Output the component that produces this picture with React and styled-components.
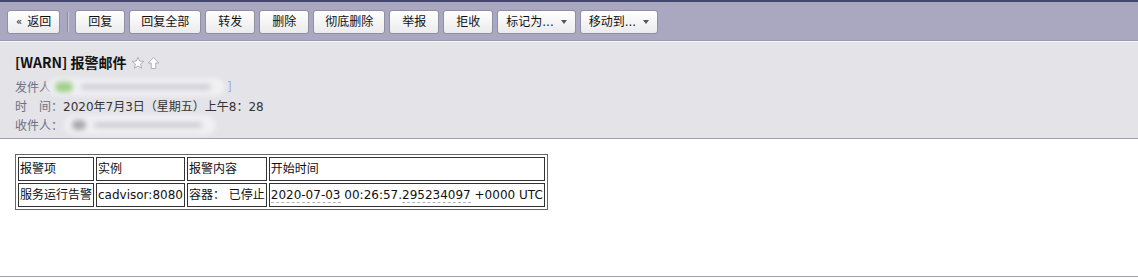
import React from 'react'
import styled, { createGlobalStyle } from 'styled-components'

const GlobalStyle = createGlobalStyle`
	body {
		margin: 0;
		background: #fff;
		font-family: "DejaVu Sans", "Noto Sans CJK SC", sans-serif;
		font-size: 12px;
	}
`

const toolButtons = [
	{ label: '回复' },
	{ label: '回复全部', pad: 11 },
	{ label: '转发' },
	{ label: '删除' },
	{ label: '彻底删除', pad: 11 },
	{ label: '举报' },
	{ label: '拒收' },
	{ label: '标记为...', menu: true },
	{ label: '移动到...', menu: true },
]

const rows = [
	['服务运行告警', 'cadvisor:8080', '容器：  已停止'],
]

const App = () => {
	return (
		<Page>
			<GlobalStyle />
			<Toolbar>
				<ToolButton pad={8}><Back>«</Back>返回</ToolButton>
				<Divider />
				{toolButtons.map((b, i) => (
					<ToolButton key={i} pad={b.pad || (b.menu ? 8 : 12)}>
						{b.label}
						{b.menu && <Caret />}
					</ToolButton>
				))}
			</Toolbar>

			<MailHead>
				<Title>
					[WARN] 报警邮件
					<Icons>
						<svg width="14" height="14" viewBox="0 0 14 14">
							<path d="M7 1.2 L8.7 5 L12.8 5.3 L9.6 8 L10.6 12.2 L7 10 L3.4 12.2 L4.4 8 L1.2 5.3 L5.3 5 Z"
								fill="#fff" stroke="#a7a7b2" strokeWidth="0.9" strokeLinejoin="round" />
						</svg>
						<svg width="13" height="14" viewBox="0 0 13 14">
							<path d="M6.5 1.5 L11.8 7 L8.8 7 L8.8 12.5 L4.2 12.5 L4.2 7 L1.2 7 Z"
								fill="#fff" stroke="#a7a7b2" strokeWidth="0.9" strokeLinejoin="round" />
						</svg>
					</Icons>
				</Title>
				<Meta>
					<Label>发件人</Label>
					<Blur width={178} offset={-4}>
						<Dot />
						<Smudge />
					</Blur>
					<Bracket>]</Bracket>
				</Meta>
				<Meta>
					<Label>时　间：</Label>
					<Value>2020年7月3日（星期五）上午8：28</Value>
				</Meta>
				<Meta>
					<Label>收件人：</Label>
					<Blur width={152} offset={1} tall>
						<Dot dark />
						<Smudge />
					</Blur>
				</Meta>
			</MailHead>

			<Body>
				<AlertTable>
					<tbody>
						<tr>
							<Cell>报警项</Cell>
							<Cell>实例</Cell>
							<Cell>报警内容</Cell>
							<Cell>开始时间</Cell>
						</tr>
						{rows.map((r, i) => (
							<tr key={i}>
								<Cell>{r[0]}</Cell>
								<Cell>{r[1]}</Cell>
								<Cell>容器：&nbsp;已停止</Cell>
								<Cell>
									<Detected>2020-07-03</Detected> 00:26:57.<Detected>295234097</Detected> +0000 UTC
								</Cell>
							</tr>
						))}
					</tbody>
				</AlertTable>
			</Body>
		</Page>
	)
}

export default App


const Page = styled.div`
	width: 100%;
	height: 279px;
	background: #fff;
`

const Toolbar = styled.div`
	display: flex;
	align-items: center;
	gap: 4px;
	background: #aaa8c0;
	border-top: 2px solid #45476f;
	border-bottom: 1px solid #9a98b2;
	padding: 8px 7px 6px;
`

const ToolButton = styled.button`
	display: flex;
	align-items: center;
	height: 24px;
	padding: 0 ${props => props.pad}px;
	border: 1px solid #8f8ea2;
	border-radius: 3px;
	background: linear-gradient(#ffffff, #ebebed);
	color: #111;
	font-family: "DejaVu Sans", "Noto Sans CJK SC", sans-serif;
	font-size: 12px;
	line-height: 22px;
	white-space: nowrap;
`

const Back = styled.span`
	font-size: 10px;
	margin-right: 5px;
`

const Caret = styled.span`
	width: 0;
	height: 0;
	margin-left: 7px;
	border-left: 3.5px solid transparent;
	border-right: 3.5px solid transparent;
	border-top: 4px solid #555;
`

const Divider = styled.span`
	width: 1px;
	height: 20px;
	margin: 0 3px;
	background: #8b8aa0;
	box-shadow: 1px 0 0 #c9c8d6;
`

const MailHead = styled.div`
	background: #e3e3e8;
	border-top: 1px solid #f6f6f8;
	border-bottom: 1px solid #9f9eb3;
	padding: 10px 15px 4px;
`

const Title = styled.div`
	display: flex;
	align-items: center;
	height: 20px;
	margin-bottom: 5px;
	font-family: "Noto Sans CJK SC", sans-serif;
	font-size: 14px;
	font-weight: bold;
	color: #111;
`

const Icons = styled.span`
	display: flex;
	align-items: center;
	gap: 2px;
	margin-left: 4px;
	margin-top: 2px;
`

const Meta = styled.div`
	display: flex;
	align-items: center;
	height: 19px;
	white-space: nowrap;
`

const Label = styled.span`
	color: #6e7084;
`

const Value = styled.span`
	color: #333;
`

const Blur = styled.span`
	display: flex;
	align-items: center;
	width: ${props => props.width}px;
	height: ${props => props.tall ? 20 : 18}px;
	margin-left: ${props => props.offset}px;
	padding-left: 8px;
	box-sizing: border-box;
	border-radius: 10px;
	background: #f0f0f3;
	filter: blur(2.5px);
`

const Dot = styled.span`
	width: ${props => props.dark ? 14 : 18}px;
	height: 10px;
	border-radius: 6px;
	background: ${props => props.dark ? '#a8a8ae' : '#9fd08a'};
	flex-shrink: 0;
`

const Smudge = styled.span`
	flex: 1;
	height: 6px;
	margin: 0 14px 0 8px;
	border-radius: 3px;
	background: #cfcfd6;
`

const Bracket = styled.span`
	margin-left: 2px;
	color: #9fb3d8;
`

const Body = styled.div`
	height: 138px;
	box-sizing: border-box;
	padding: 15px 15px;
	border-bottom: 1px solid #9f9eb3;
`

const AlertTable = styled.table`
	border: 1px solid #666;
	border-spacing: 2px;
	font-size: 12px;
	color: #111;
`

const Cell = styled.td`
	border: 1px solid #333;
	padding: 3px 1px;
	line-height: 16px;
	white-space: nowrap;
`

const Detected = styled.span`
	border-bottom: 1px dashed #b5b5b5;
`
